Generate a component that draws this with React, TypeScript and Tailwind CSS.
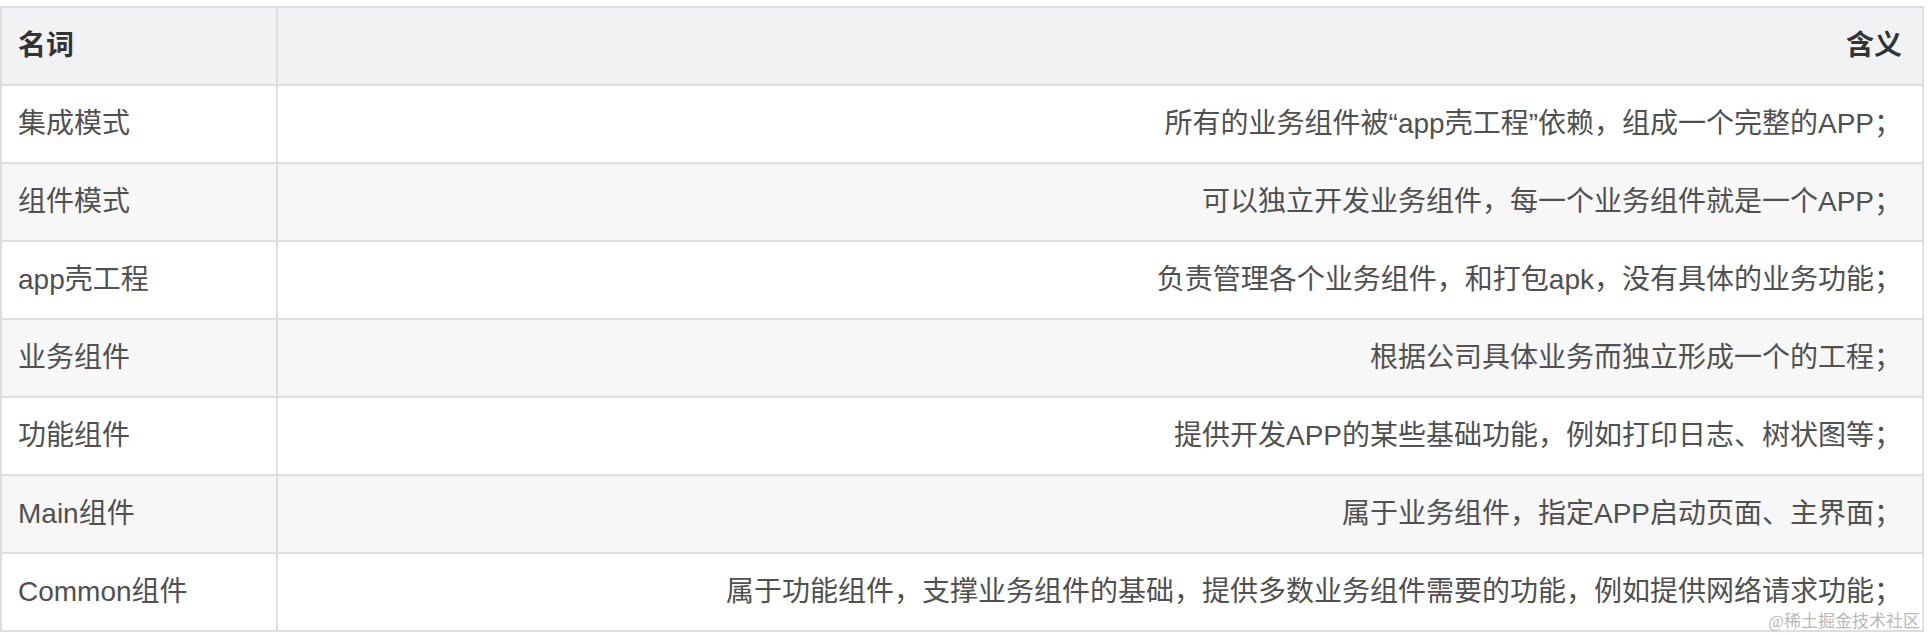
const rows: [string, string][] = [
  ["集成模式", "所有的业务组件被“app壳工程”依赖，组成一个完整的APP；"],
  ["组件模式", "可以独立开发业务组件，每一个业务组件就是一个APP；"],
  ["app壳工程", "负责管理各个业务组件，和打包apk，没有具体的业务功能；"],
  ["业务组件", "根据公司具体业务而独立形成一个的工程；"],
  ["功能组件", "提供开发APP的某些基础功能，例如打印日志、树状图等；"],
  ["Main组件", "属于业务组件，指定APP启动页面、主界面；"],
  ["Common组件", "属于功能组件，支撑业务组件的基础，提供多数业务组件需要的功能，例如提供网络请求功能；"],
];

export default function App() {
  return (
    <div
      className="w-[1928px] h-[636px] bg-white pt-[6px] overflow-hidden"
      style={{ fontFamily: '"Liberation Sans", "Noto Sans CJK SC", sans-serif' }}
    >
      <div className="relative w-[1924px]">
        <table className="w-full border-collapse text-[28px] leading-none">
          <thead>
            <tr className="bg-[#f1f2f4]">
              <th className="w-[276px] h-[78px] border-2 border-[#dedede] pl-4 text-left font-semibold text-[#333]">
                名词
              </th>
              <th className="h-[78px] border-2 border-[#dedede] pr-[20px] text-right font-semibold text-[#333]">
                含义
              </th>
            </tr>
          </thead>
          <tbody>
            {rows.map(([name, desc], i) => (
              <tr key={i} className={i % 2 === 1 ? "bg-[#f7f7f7]" : "bg-white"}>
                <td className="h-[78px] border-2 border-[#dedede] pl-4 text-left text-[#505050]">
                  {name}
                </td>
                <td className="h-[78px] border-2 border-[#dedede] pr-[20px] text-right text-[#505050]">
                  {desc}
                </td>
              </tr>
            ))}
          </tbody>
        </table>
        <span
          className="absolute right-[4px] bottom-[2px] text-[17px] leading-none text-[#b8b8b8]"
          style={{ fontFamily: '"Liberation Serif", "Noto Sans CJK SC", serif' }}
        >
          @稀土掘金技术社区
        </span>
      </div>
    </div>
  );
}
